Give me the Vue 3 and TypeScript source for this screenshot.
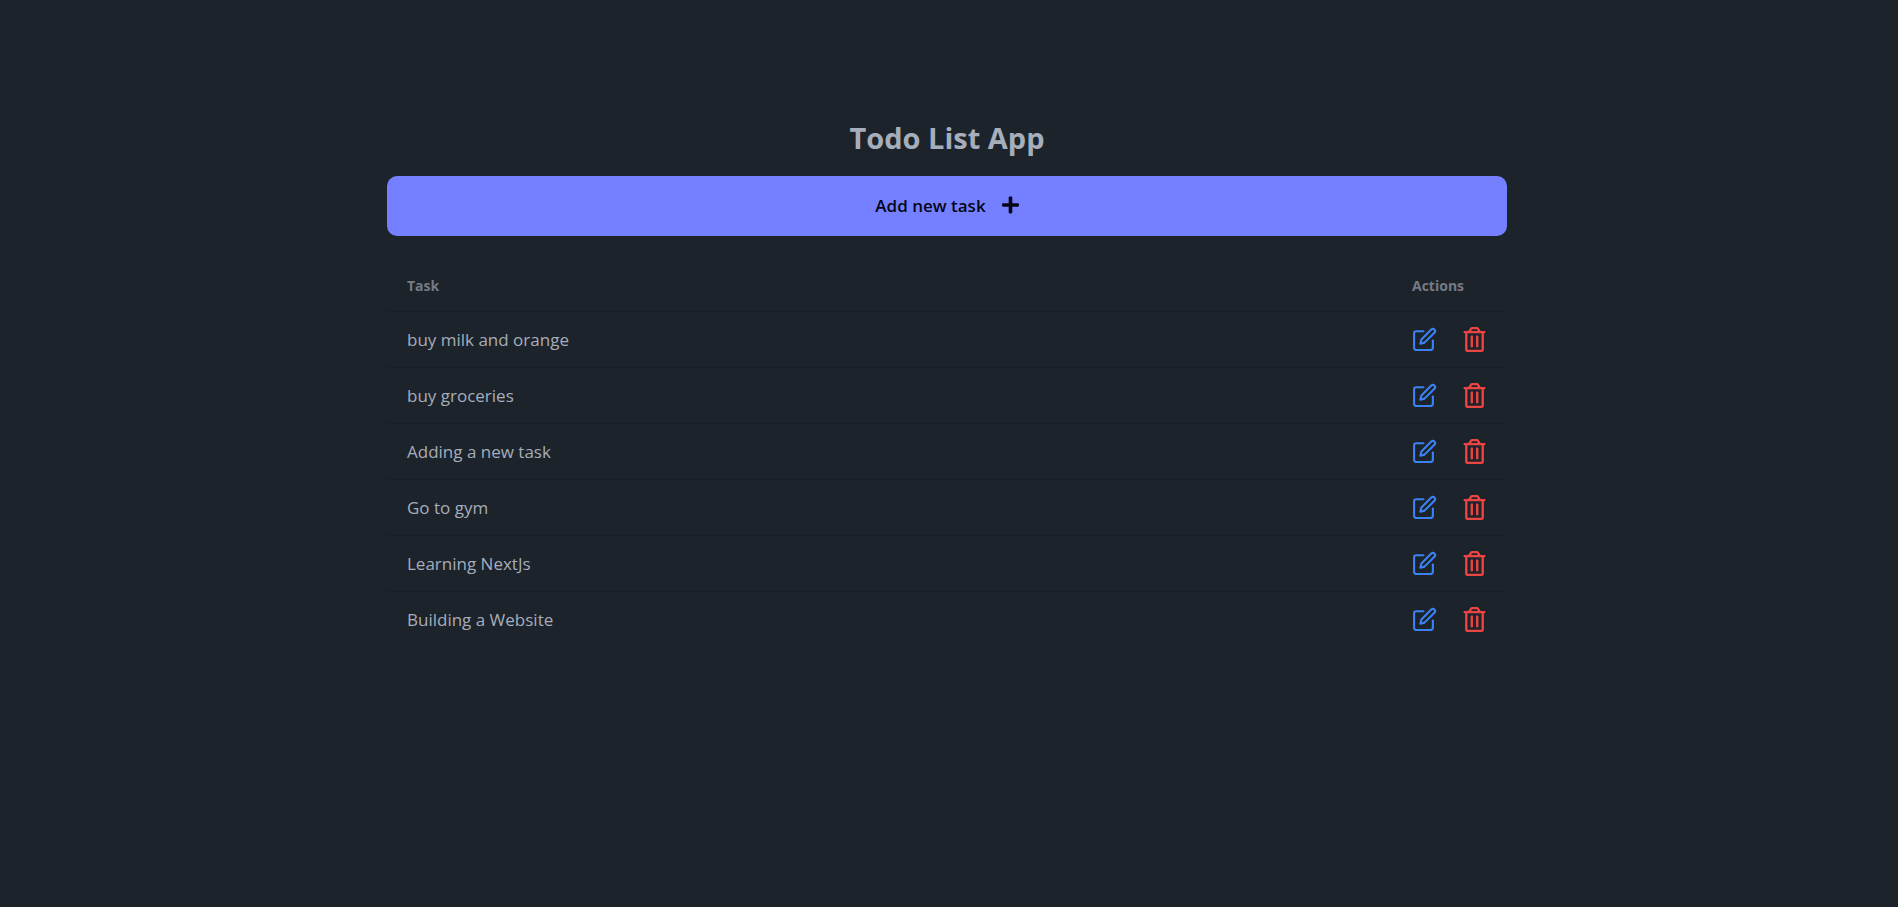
<script setup lang="ts">
import { ref } from 'vue'

interface Task {
  id: number
  text: string
}

const tasks = ref<Task[]>([
  { id: 1, text: 'buy milk and orange' },
  { id: 2, text: 'buy groceries' },
  { id: 3, text: 'Adding a new task' },
  { id: 4, text: 'Go to gym' },
  { id: 5, text: 'Learning NextJs' },
  { id: 6, text: 'Building a Website' },
])

function removeTask(id: number): void {
  tasks.value = tasks.value.filter((task) => task.id !== id)
}
</script>

<template>
  <main class="page">
    <header class="top">
      <h1 class="title">Todo List App</h1>
      <button type="button" class="add">
        Add new task
        <svg class="plus" viewBox="0 0 448 512" fill="currentColor" aria-hidden="true">
          <path d="M416 208H272V64c0-17.67-14.33-32-32-32h-32c-17.67 0-32 14.33-32 32v144H32c-17.67 0-32 14.33-32 32v32c0 17.67 14.33 32 32 32h144v144c0 17.67 14.33 32 32 32h32c17.67 0 32-14.33 32-32V304h144c17.67 0 32-14.33 32-32v-32c0-17.67-14.33-32-32-32z" />
        </svg>
      </button>
    </header>

    <table class="tasks">
      <thead>
        <tr>
          <th scope="col">Task</th>
          <th scope="col" class="actions-col">Actions</th>
        </tr>
      </thead>
      <tbody>
        <tr v-for="task in tasks" :key="task.id">
          <td>{{ task.text }}</td>
          <td class="actions-col">
            <div class="actions">
              <button type="button" class="icon edit" :aria-label="`Edit ${task.text}`">
                <svg viewBox="0 0 24 24" fill="none" stroke="currentColor" stroke-width="2" stroke-linecap="round" stroke-linejoin="round" aria-hidden="true">
                  <path d="M11 4H4a2 2 0 0 0-2 2v14a2 2 0 0 0 2 2h14a2 2 0 0 0 2-2v-7" />
                  <path d="M18.500 2.500a2.121 2.121 0 0 1 3 3L12 15l-4 1 1-4 9.500-9.500z" />
                </svg>
              </button>
              <button type="button" class="icon delete" :aria-label="`Delete ${task.text}`" @click="removeTask(task.id)">
                <svg viewBox="0 0 448 512" fill="currentColor" aria-hidden="true">
                  <path d="M268 416h24a12 12 0 0 0 12-12V188a12 12 0 0 0-12-12h-24a12 12 0 0 0-12 12v216a12 12 0 0 0 12 12zM432 80h-82.41l-34-56.7A48 48 0 0 0 274.41 0H173.59a48 48 0 0 0-41.16 23.3L98.41 80H16A16 16 0 0 0 0 96v16a16 16 0 0 0 16 16h16v336a48 48 0 0 0 48 48h288a48 48 0 0 0 48-48V128h16a16 16 0 0 0 16-16V96a16 16 0 0 0-16-16zM171.84 50.91A6 6 0 0 1 177 48h94a6 6 0 0 1 5.15 2.91L293.61 80H154.39zM368 464H80V128h288zm-212-48h24a12 12 0 0 0 12-12V188a12 12 0 0 0-12-12h-24a12 12 0 0 0-12 12v216a12 12 0 0 0 12 12z" />
                </svg>
              </button>
            </div>
          </td>
        </tr>
      </tbody>
    </table>
  </main>
</template>

<style>
body {
  background: #1d232a;
}
</style>

<style scoped>
.page {
  max-width: 1120px;
  margin: 0 auto;
  padding: 118px 4px 0 0;
  font-family: "Segoe UI", "Open Sans", "Noto Sans", sans-serif;
  color: #a6adbb;
}

.top {
  display: flex;
  flex-direction: column;
  gap: 18px;
  text-align: center;
}

.title {
  margin: 0;
  font-size: 29px;
  line-height: 40px;
  font-weight: 700;
}

.add {
  display: flex;
  align-items: center;
  justify-content: center;
  gap: 16px;
  width: 100%;
  height: 60px;
  padding: 0 0 2px;
  border: 0;
  border-radius: 10px;
  background: #7480ff;
  color: #050617;
  font-family: inherit;
  font-size: 17px;
  font-weight: 600;
  cursor: pointer;
}

.plus {
  width: 17px;
  height: 20px;
}

.tasks {
  width: 100%;
  margin-top: 25px;
  border-collapse: collapse;
  text-align: left;
  font-size: 17px;
  line-height: 24px;
}

.tasks th,
.tasks td {
  padding: 15px 20px;
}

.tasks th {
  color: #747b86;
  font-size: 14px;
  line-height: 20px;
  font-weight: 700;
}

.tasks thead tr,
.tasks tbody tr:not(:last-child) {
  border-bottom: 1px solid #191e24;
}

.tasks .actions-col {
  width: 75px;
}

.actions {
  display: flex;
  gap: 25px;
}

.icon {
  display: flex;
  padding: 0;
  border: 0;
  background: none;
  cursor: pointer;
}

.icon svg {
  width: 25px;
  height: 25px;
}

.edit {
  color: #3b82f6;
}

.delete {
  color: #ef4444;
}
</style>
